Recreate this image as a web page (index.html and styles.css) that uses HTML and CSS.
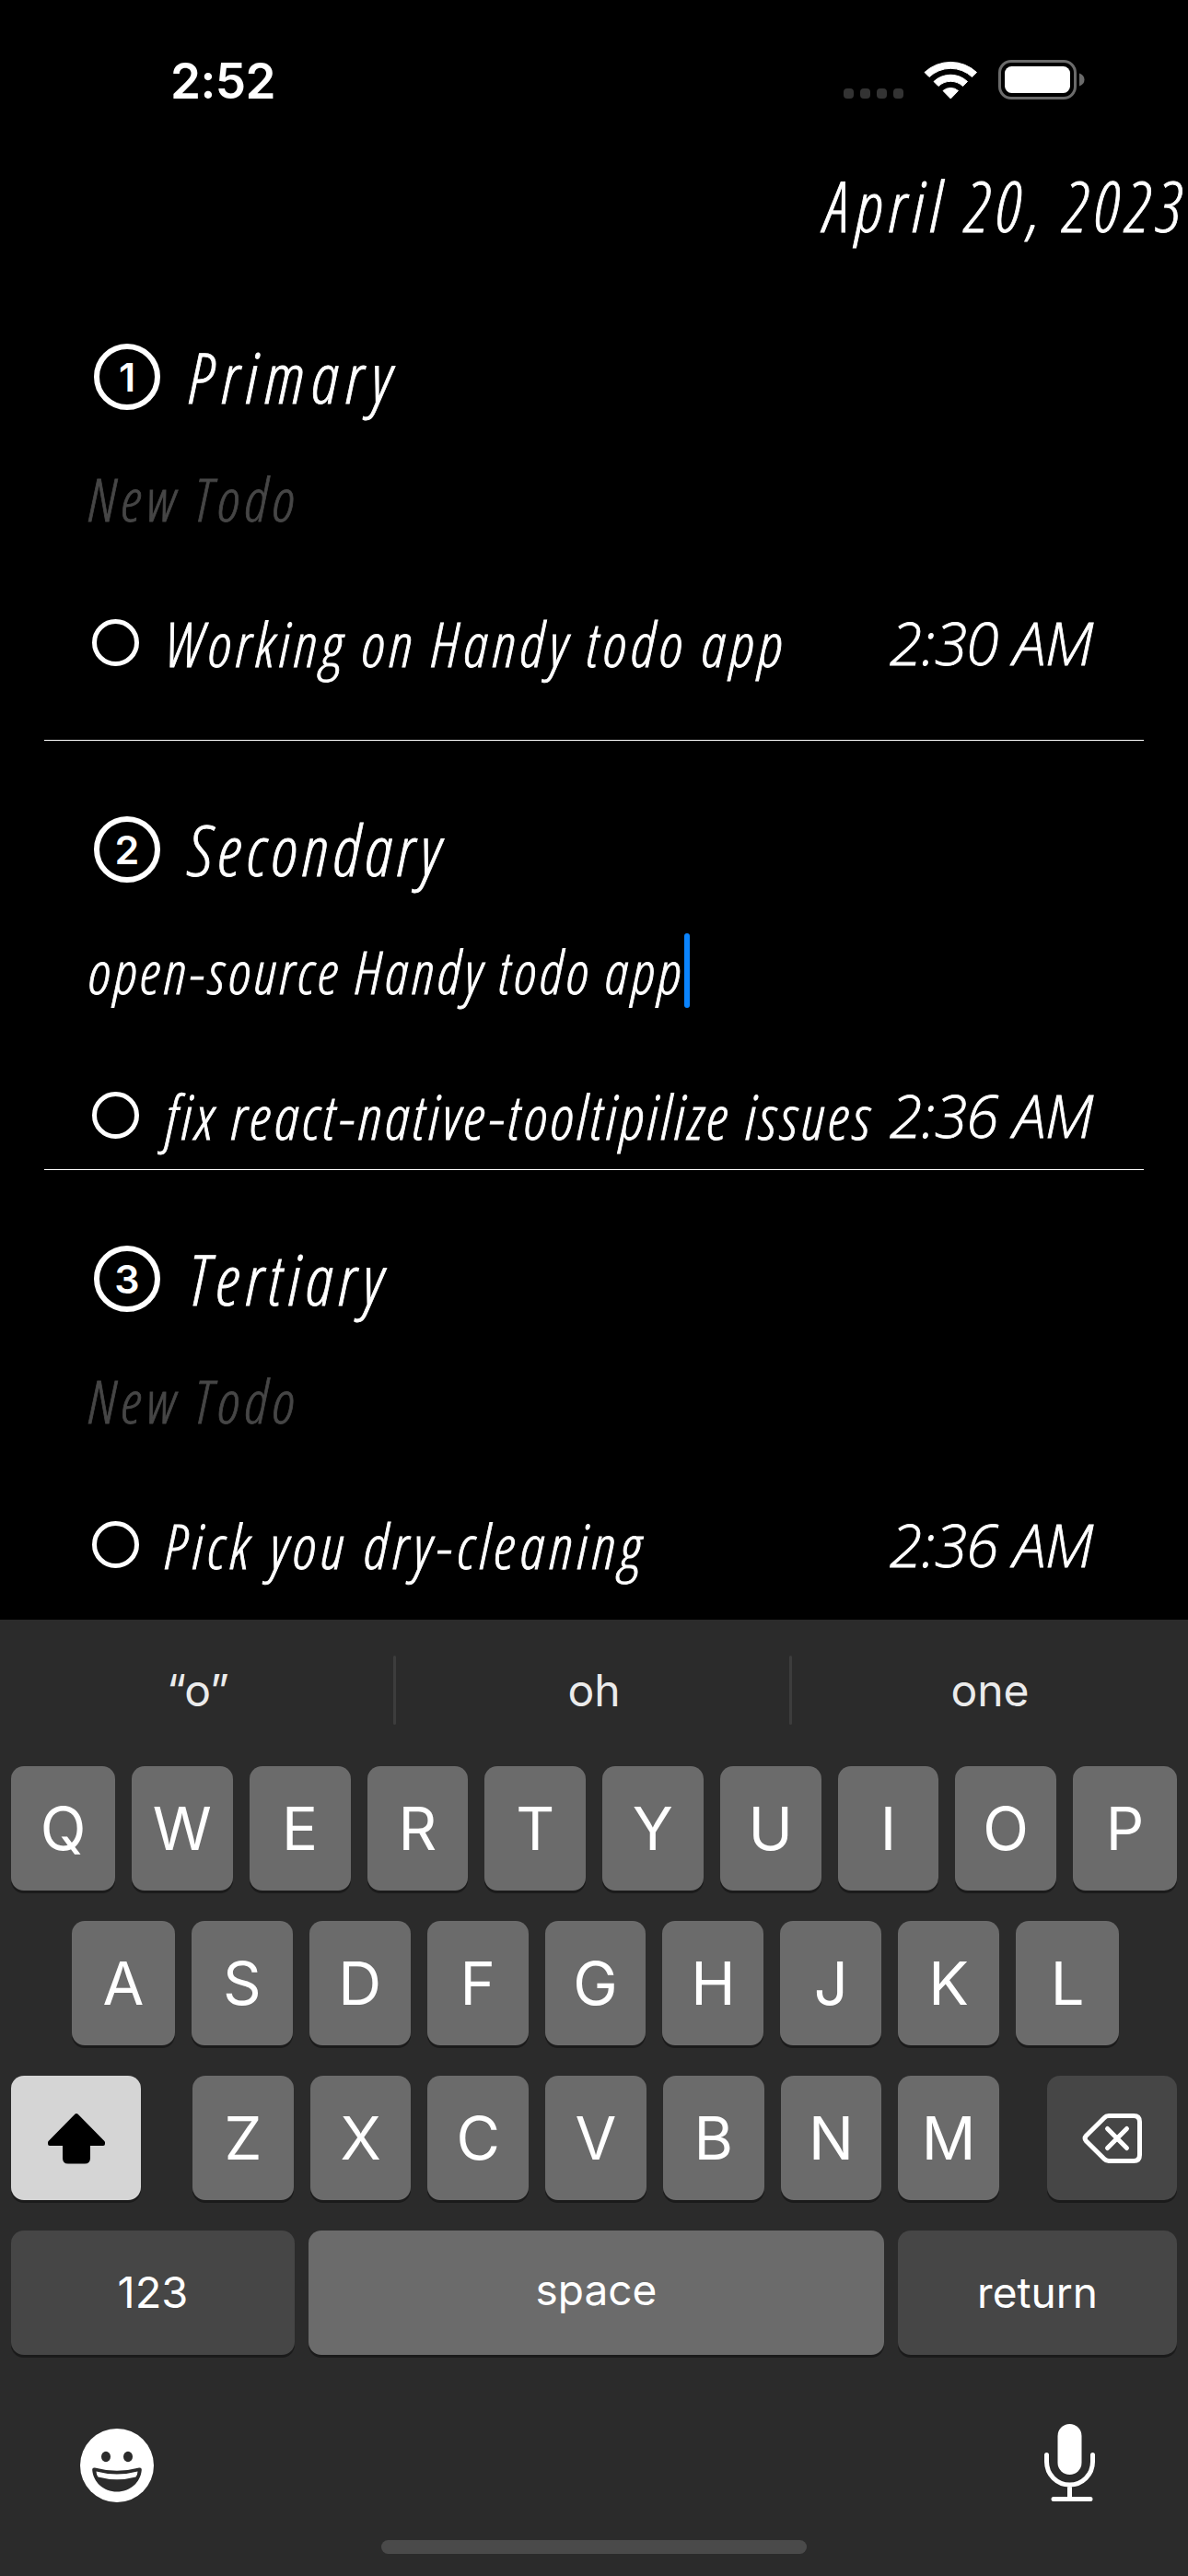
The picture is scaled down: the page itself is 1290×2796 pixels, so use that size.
FILE: index.html
```html
<!DOCTYPE html>
<html lang="en">
<head>
<meta charset="utf-8">
<title>Handy</title>
<link rel="stylesheet" href="styles.css">
</head>
<body>
<div class="screen">
  <header class="status">
    <span class="clock">2:52</span>
    <div class="indicators">
      <div class="signal"><i></i><i></i><i></i><i></i></div>
      <svg class="wifi" viewBox="0 0 60 44" width="60" height="44">
        <path d="M1 13.5A41.500 41.500 0 0 1 57.500 13.500L52.500 18.500A34 34 0 0 0 6 18.500Z" fill="#fff" stroke="#fff" stroke-width="1" stroke-linejoin="round"/>
        <path d="M11 23.500A26.500 26.500 0 0 1 47.500 23.500L42.500 28.500A19.500 19.500 0 0 0 16 28.500Z" fill="#fff" stroke="#fff" stroke-width="1" stroke-linejoin="round"/>
        <path d="M21 33.500A12.500 12.500 0 0 1 37.500 33.500L29.300 42Z" fill="#fff" stroke="#fff" stroke-width="1" stroke-linejoin="round"/>
      </svg>
      <svg class="battery" viewBox="0 0 94 43" width="94" height="43">
        <rect x="1.500" y="1.500" width="82" height="40" rx="12.500" fill="none" stroke="#6b6b6b" stroke-width="3"/>
        <rect x="7" y="7" width="71" height="29" rx="7.500" fill="#fff"/>
        <path d="M88 14.500q5.500 2 5.500 7t-5.500 7z" fill="#6b6b6b"/>
      </svg>
    </div>
  </header>

  <main class="list">
    <div class="date">April 20, 2023</div>

    <section class="group">
      <h2 class="heading"><span class="num">1</span><span class="title primary">Primary</span></h2>
      <div class="entry"><span class="placeholder">New Todo</span></div>
      <div class="item"><span class="check"></span><span class="text working">Working on Handy todo app</span><span class="time">2:30 AM</span></div>
    </section>

    <section class="group tight">
      <h2 class="heading"><span class="num">2</span><span class="title secondary">Secondary</span></h2>
      <div class="entry"><span class="typed">open-source Handy todo app</span><span class="caret"></span></div>
      <div class="item"><span class="check"></span><span class="text fix">fix react-native-tooltipilize issues</span><span class="time">2:36 AM</span></div>
    </section>

    <section class="group last">
      <h2 class="heading"><span class="num">3</span><span class="title tertiary">Tertiary</span></h2>
      <div class="entry"><span class="placeholder">New Todo</span></div>
      <div class="item"><span class="check"></span><span class="text pick">Pick you dry-cleaning</span><span class="time">2:36 AM</span></div>
    </section>
  </main>

  <div class="keyboard">
    <div class="suggestions"><span>“o”</span><b></b><span>oh</span><b></b><span>one</span></div>
    <div class="row">
      <span class="key edge">Q</span><span class="key">W</span><span class="key">E</span><span class="key">R</span><span class="key">T</span><span class="key">Y</span><span class="key">U</span><span class="key">I</span><span class="key">O</span><span class="key edge">P</span>
    </div>
    <div class="row home-row">
      <span class="key edge">A</span><span class="key">S</span><span class="key">D</span><span class="key">F</span><span class="key">G</span><span class="key">H</span><span class="key">J</span><span class="key">K</span><span class="key edge">L</span>
    </div>
    <div class="row">
      <span class="key wide shift">
        <svg viewBox="0 0 64 56" width="64" height="56"><path d="M32 3L61 32.500V34H45V49.500Q45 53.500 41 53.500H23Q19 53.500 19 49.500V34H3V32.500Z" fill="#000" stroke="#000" stroke-width="4" stroke-linejoin="round"/></svg>
      </span>
      <span class="letters"><span class="key">Z</span><span class="key">X</span><span class="key">C</span><span class="key">V</span><span class="key">B</span><span class="key">N</span><span class="key">M</span></span>
      <span class="key wide dark">
        <svg viewBox="0 0 66 54" width="66" height="54" fill="none" stroke="#fff" stroke-width="5" stroke-linejoin="round" stroke-linecap="round"><path d="M29 2.500H56Q62.500 2.500 62.500 9V45Q62.500 51.500 56 51.500H29Q26 51.500 24 49.300L4.500 30Q1.800 27 4.500 24L24 4.700Q26 2.500 29 2.500Z"/><path d="M27.500 16.500L48.500 37.500M48.500 16.500L27.500 37.500"/></svg>
      </span>
    </div>
    <div class="row bottom-row">
      <span class="key dark small numbers">123</span><span class="key small space">space</span><span class="key dark small return">return</span>
    </div>
    <div class="tools">
      <svg viewBox="0 0 82 82" width="82" height="82">
        <circle cx="41" cy="41" r="40" fill="#fff"/>
        <ellipse cx="29" cy="31.500" rx="5" ry="5.700" fill="#2b2b2b"/>
        <ellipse cx="53" cy="31.500" rx="5" ry="5.700" fill="#2b2b2b"/>
        <path d="M17 43.500Q41 50 65 43.500Q68 43 67.800 46C66.500 59.500 55.500 69.500 41 69.500S15.500 59.500 14.200 46Q14 43 17 43.500Z" fill="#2b2b2b"/>
        <path d="M18.500 47.500Q41 53.500 63.500 47.500Q63.500 50.500 61.500 53.500Q41 59 20.500 53.500Q18.500 50.500 18.500 47.500Z" fill="#fff"/>
      </svg>
      <svg viewBox="0 0 58 86" width="58" height="86">
        <rect x="15.500" y="1" width="26" height="55" rx="13" fill="#fff"/>
        <path d="M3.500 34.500V42A25 25 0 0 0 53.500 42V34.500M28.500 67V82M11 82.500H51" fill="none" stroke="#fff" stroke-width="5" stroke-linecap="round"/>
      </svg>
    </div>
    <div class="home-indicator"></div>
  </div>
</div>
</body>
</html>
```
FILE: styles.css
```css
* { box-sizing: border-box; }

body {
  margin: 0;
  background: #000;
  color: #fff;
  font-family: Inter, "Liberation Sans", sans-serif;
}

.screen {
  display: flex;
  flex-direction: column;
  width: 1290px;
  height: 2796px;
  overflow: hidden;
}

/* Status bar */
.status {
  display: flex;
  justify-content: space-between;
  align-items: flex-start;
  height: 169px;
  padding: 65px 112px 0 185px;
}
.clock {
  font-size: 53px;
  font-weight: 600;
  line-height: 46px;
  letter-spacing: -0.6px;
}
.indicators { display: flex; }
.signal { display: flex; gap: 7px; padding-top: 31px; margin-right: 22px; }
.signal i { width: 11px; height: 11px; border-radius: 4px; background: #333; }
.wifi { margin-right: 21px; }

/* Todo list */
.list {
  height: 1589px;
  overflow: hidden;
  font-family: "Open Sans", "Noto Sans", sans-serif;
  font-style: italic;
  font-weight: 300;
  font-stretch: 75%;
  white-space: nowrap;
  -webkit-text-stroke: 0.8px;
}
.date {
  height: 204px;
  padding-top: 4px;
  text-align: right;
  font-size: 75px;
  line-height: 100px;
  letter-spacing: 6.7px;
}
.group {
  margin: 0 48px 82px;
  padding: 0 55px 66px 48px;
  border-bottom: 1px solid #fff;
}
.group.tight { padding-bottom: 19px; }
.group.last { margin-bottom: 0; padding-bottom: 0; border-bottom: 0; }

.heading {
  display: flex;
  align-items: center;
  gap: 31px;
  height: 72px;
  margin: 0 0 55px;
  padding-left: 6px;
  font-size: 75px;
  font-weight: 300;
}
.num {
  width: 72px;
  height: 72px;
  border: 6px solid #fff;
  border-radius: 50%;
  font: 600 43px/60px Inter, sans-serif;
  text-align: center;
  -webkit-text-stroke: 0;
}
.title { line-height: 72px; padding-bottom: 1px; }
.primary { letter-spacing: 7.8px; }
.secondary { letter-spacing: 5.2px; }
.tertiary { letter-spacing: 6.2px; }

.entry {
  display: flex;
  height: 80px;
  margin-bottom: 77px;
  font-size: 64px;
  line-height: 83px;
}
.placeholder { color: #464646; letter-spacing: 5px; }
.typed { letter-spacing: 3.6px; }
.caret { width: 6px; height: 81px; border-radius: 3px; background: #0a84ff; }

.item {
  display: flex;
  align-items: center;
  height: 80px;
  padding-left: 4px;
  font-size: 67px;
}
.check {
  width: 51px;
  height: 51px;
  margin-right: 28px;
  border: 5px solid #fff;
  border-radius: 50%;
}
.text, .time { line-height: 80px; padding-top: 1px; }
.working { margin-left: 1px; letter-spacing: 4.6px; }
.fix { margin-left: 1px; letter-spacing: 3.6px; }
.pick { letter-spacing: 5px; }
.time { margin-left: auto; font-size: 64px; font-stretch: 100%; letter-spacing: -0.5px; }

/* Keyboard */
.keyboard {
  display: flex;
  flex-direction: column;
  flex: 1;
  background: #2b2b2b;
}
.suggestions {
  display: flex;
  align-items: center;
  height: 159px;
  padding-bottom: 6px;
  color: #ebebeb;
  font-size: 48px;
}
.suggestions span { flex: 0 0 427px; padding-left: 3px; text-align: center; }
.suggestions b { width: 3px; height: 75px; border-radius: 2px; background: #3d3d3d; }

.row {
  display: flex;
  justify-content: space-between;
  gap: 18px;
  height: 135px;
  margin-bottom: 33px;
  padding: 0 12px;
}
.home-row { padding: 0 75px 0 78px; }
.key {
  display: flex;
  align-items: center;
  justify-content: center;
  flex: 1 1 0;
  border-radius: 14px;
  background: #6b6b6b;
  box-shadow: 0 3px 0 #1b1b1b;
  font-size: 65px;
}
.key.edge { flex: 0 0 113px; }
.home-row .key.edge { flex-basis: 112px; }
.key.wide { flex: 0 0 141px; }
.key.dark { background: #464646; }
.key.shift { background: #d5d5d5; }
.letters { display: flex; gap: 18px; width: 876px; margin: 0 34px 0 auto; }
.bottom-row { gap: 15px; }
.key.small { padding-bottom: 2px; font-size: 46px; }
.key.numbers { flex: 0 0 308px; font-size: 47px; }
.key.small.space { padding-bottom: 8px; }
.key.return { flex: 0 0 303px; }

.tools {
  display: flex;
  justify-content: space-between;
  height: 126px;
  padding: 0 99px 0 86px;
  margin-top: 41px;
}
.tools svg:first-child { margin-top: 5px; }
.home-indicator {
  width: 462px;
  height: 15px;
  margin: 1px 0 0 414px;
  border-radius: 8px;
  background: #4a4a4a;
}
```
